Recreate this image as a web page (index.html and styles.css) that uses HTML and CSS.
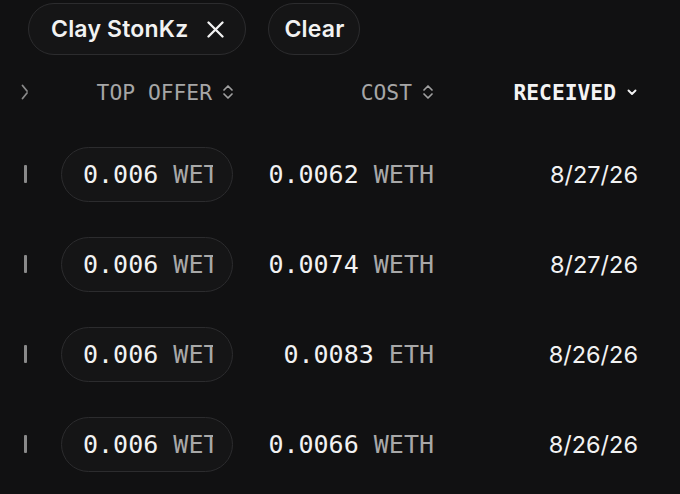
FILE: index.html
```html
<!DOCTYPE html>
<html>
<head>
<meta charset="utf-8">
<link rel="stylesheet" href="styles.css">
</head>
<body>
<div class="filters">
  <div class="chip"><span>Clay StonKz</span>
    <svg class="x" width="17" height="17" viewBox="0 0 17 17"><path d="M1.5 1.5L15.5 15.5M15.5 1.5L1.5 15.5" stroke="#f2f2f2" stroke-width="2.3" stroke-linecap="round"/></svg>
  </div>
  <div class="chip"><span>Clear</span></div>
</div>
<div class="table">
  <div class="row head">
    <div class="c1"><svg width="8" height="16" viewBox="0 0 8 16"><path d="M1.5 1.5L6 7M6 9L1.5 14.5" stroke="#8a8a8a" stroke-width="1.8" stroke-linecap="round"/></svg></div>
    <div class="c2 hd"><span>TOP OFFER</span><svg class="sort" width="12" height="18" viewBox="0 0 12 18"><path d="M2 7L6 3L10 7M2 11L6 15L10 11" fill="none" stroke="#a0a0a0" stroke-width="1.7" stroke-linecap="round" stroke-linejoin="round"/></svg></div>
    <div class="c3 hd"><span>COST</span><svg class="sort" width="12" height="18" viewBox="0 0 12 18"><path d="M2 7L6 3L10 7M2 11L6 15L10 11" fill="none" stroke="#a0a0a0" stroke-width="1.7" stroke-linecap="round" stroke-linejoin="round"/></svg></div>
    <div class="c4 hd active"><span>RECEIVED</span><svg class="sort" width="12" height="18" viewBox="0 0 12 18"><path d="M2.5 7.5L6 11L9.5 7.5" fill="none" stroke="#f2f2f2" stroke-width="1.9" stroke-linecap="round" stroke-linejoin="round"/></svg></div>
  </div>
  <div class="row">
    <div class="c1"><span class="bar"></span></div>
    <div class="c2"><div class="offer"><span class="clip"><span class="num">0.006</span> <span class="unit">WETH</span></span></div></div>
    <div class="c3"><span class="val"><span class="num">0.0062</span> <span class="unit">WETH</span></span></div>
    <div class="c4 date">8/27/26</div>
  </div>
  <div class="row">
    <div class="c1"><span class="bar"></span></div>
    <div class="c2"><div class="offer"><span class="clip"><span class="num">0.006</span> <span class="unit">WETH</span></span></div></div>
    <div class="c3"><span class="val"><span class="num">0.0074</span> <span class="unit">WETH</span></span></div>
    <div class="c4 date">8/27/26</div>
  </div>
  <div class="row">
    <div class="c1"><span class="bar"></span></div>
    <div class="c2"><div class="offer"><span class="clip"><span class="num">0.006</span> <span class="unit">WETH</span></span></div></div>
    <div class="c3"><span class="val"><span class="num">0.0083</span> <span class="unit">ETH</span></span></div>
    <div class="c4 date">8/26/26</div>
  </div>
  <div class="row">
    <div class="c1"><span class="bar"></span></div>
    <div class="c2"><div class="offer"><span class="clip"><span class="num">0.006</span> <span class="unit">WETH</span></span></div></div>
    <div class="c3"><span class="val"><span class="num">0.0066</span> <span class="unit">WETH</span></span></div>
    <div class="c4 date">8/26/26</div>
  </div>
</div>
</body>
</html>
```
FILE: styles.css
```css
html, body {
  margin: 0;
  padding: 0;
  background: #111112;
  width: 680px;
  height: 494px;
  overflow: hidden;
}
.filters {
  display: flex;
  gap: 22px;
  padding: 3px 0 0 28px;
}
.chip {
  height: 50px;
  border: 1px solid #2c2c2e;
  background: #151516;
  border-radius: 26px;
  display: flex;
  align-items: center;
  gap: 19px;
  padding: 0 21px 0 22px;
  font-family: Inter, "Noto Sans", sans-serif;
  font-weight: 600;
  font-size: 23px;
  color: #f2f2f2;
  letter-spacing: 0.2px;
}
.chip:last-child { padding: 0 14px 0 15px; }
.x { display: block; }
.table { font-family: "DejaVu Sans Mono", monospace; }
.row {
  display: flex;
  align-items: center;
  height: 90px;
}
.row.head { height: 74px; }
.c1 { width: 27px; display: flex; justify-content: flex-end; flex: none; }
.head .c1 { width: 29px; }
.c2 { width: 207px; flex: none; display: flex; justify-content: flex-end; align-items: center; }
.c3 { width: 200px; flex: none; display: flex; justify-content: flex-end; align-items: center; font-size: 25px; }
.c4 { width: 204px; flex: none; display: flex; justify-content: flex-end; align-items: center; }
.head .c1 svg { display: block; }
.head .c2 { width: 205px; }
.val { white-space: pre; }
.hd {
  font-size: 21.3px;
  color: #a6a6a6;
  white-space: pre;
}
.hd .sort { margin-left: 10px; display: block; }
.active { color: #f4f4f4; font-weight: bold; }
.bar {
  display: block;
  width: 3px;
  height: 18px;
  background: #8a8a8a;
  border-radius: 1px;
}
.offer {
  box-sizing: border-box;
  width: 172px;
  height: 55px;
  border: 1px solid #2c2c2e;
  background: #151516;
  border-radius: 28px;
  display: flex;
  align-items: center;
  padding-left: 21px;
  font-size: 25px;
  margin-right: 1px;
}
.clip {
  display: block;
  width: 130px;
  overflow: hidden;
  white-space: pre;
}
.num { color: #f2f2f2; }
.unit { color: #a8a8a8; }
.date {
  font-family: Inter, "Noto Sans", sans-serif;
  font-size: 23.5px;
  color: #f2f2f2;
}
```
